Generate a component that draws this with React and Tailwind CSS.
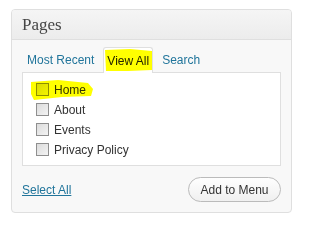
import React from "react";

const sans = { fontFamily: '"Liberation Sans", Arial, sans-serif' };

function Check() {
  return (
    <span className="inline-block w-[13px] h-[13px] border border-[#8f8f8f] bg-gradient-to-br from-[#dcdcdc] to-[#f4f4f4] shrink-0" />
  );
}

export default function App() {
  const items = ["Home", "About", "Events", "Privacy Policy"];
  return (
    <div className="relative w-[304px] h-[224px] bg-white pt-[9px] pl-[11px]" style={sans}>
      <div className="w-[281px] h-[204px] border border-[#dfdfdf] rounded-[4px] bg-[#f8f8f8] overflow-hidden flex flex-col">
        <div className="h-[30px] bg-gradient-to-b from-[#f5f5f5] to-[#ececec] border-b border-[#dfdfdf] flex items-center pl-[10px]">
          <span className="text-[17px] text-[#464646] leading-none" style={{ fontFamily: '"Liberation Serif", Georgia, serif' }}>
            Pages
          </span>
        </div>
        <div className="px-[10px] pt-[7px] flex flex-col">
          <div className="flex items-end h-[25px] text-[12px] text-[#21759b]">
            <span className="pl-[5px] pr-[9px] h-[25px] flex items-center">Most Recent</span>
            <span className="h-[26px] -mb-px relative z-10 bg-white border border-[#dfdfdf] border-b-0 rounded-t-[3px] px-[3px] flex items-center text-[#222]">
              View All
            </span>
            <span className="pl-[9px] h-[25px] flex items-center">Search</span>
          </div>
          <div className="h-[94px] bg-white border border-[#dfdfdf] pt-[10px] pl-[13px] flex flex-col gap-[7px] text-[12px] text-[#333]">
            {items.map((t) => (
              <div key={t} className="flex items-center gap-[5px] h-[13px]">
                <Check />
                <span className="leading-none">{t}</span>
              </div>
            ))}
          </div>
          <div className="flex items-center justify-between mt-[11px]">
            <span className="text-[12px] text-[#21759b] underline">Select All</span>
            <span className="w-[93px] h-[25px] rounded-full border border-[#bbbbbb] bg-gradient-to-b from-[#fefefe] to-[#f0f0f0] flex items-center justify-center text-[12px] text-[#333]">
              Add to Menu
            </span>
          </div>
        </div>
      </div>
      <svg className="absolute left-0 top-0 z-20 pointer-events-none mix-blend-multiply" width="304" height="224">
        <polygon points="31,82 58,80 88,83 93,89 91,96 62,97 34,100 31,94" fill="#ffff00" />
        <polygon points="105,50 130,49 152,51 152,70 128,71 106,71" fill="#ffff00" />
      </svg>
    </div>
  );
}
